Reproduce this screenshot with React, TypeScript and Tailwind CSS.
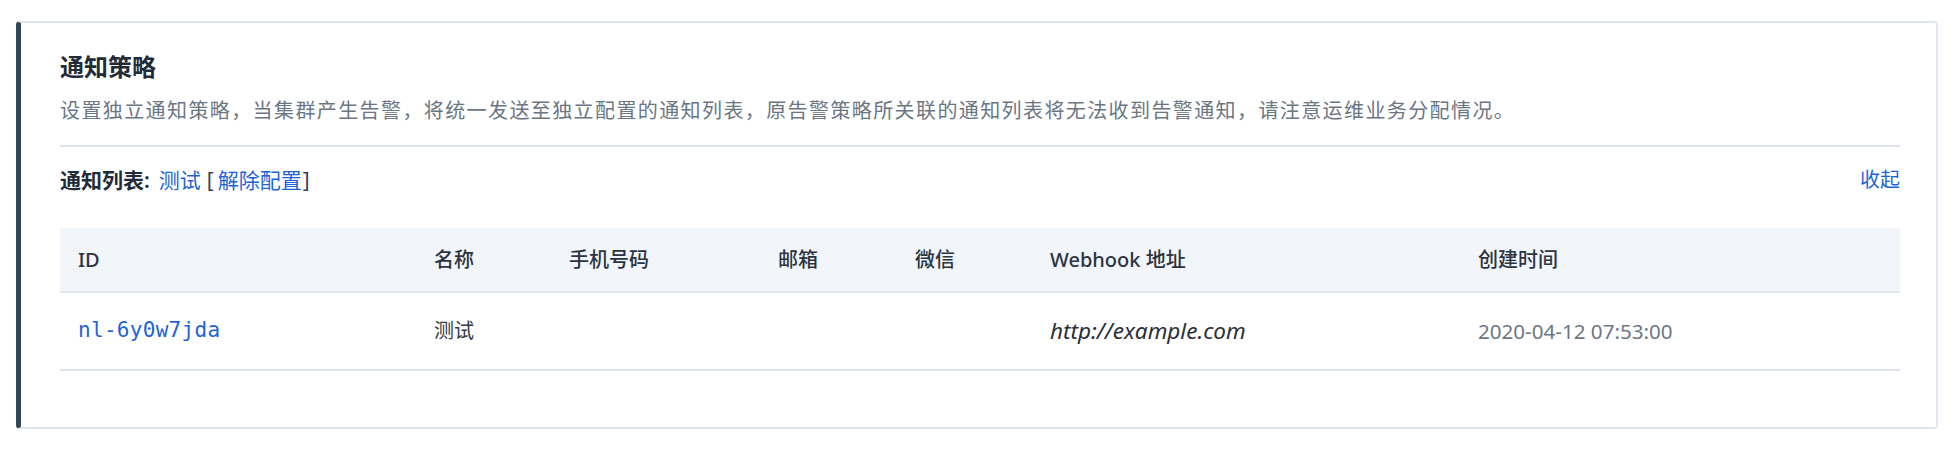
import React from "react";

const cols = "grid grid-cols-[356px_135px_209px_137px_135px_428px_440px]";

export default function App() {
  return (
    <div
      className="w-[1960px] h-[452px] bg-white pt-[21px] pl-[16px] pr-[22px]"
      style={{ fontFamily: '"Noto Sans", "Noto Sans CJK SC", sans-serif' }}
    >
      <div className="h-[408px] border-2 border-[#dfe6ee] border-l-[5px] border-l-[#34465a] rounded-[4px] pl-[39px] pr-[36px] pt-[28px]">
        <div className="text-[24px] leading-[32px] font-semibold text-[#222b38]">通知策略</div>
        <div className="mt-[13px] text-[20px] leading-[30px] tracking-[1.4px] text-[#6b7684] whitespace-nowrap">
          设置独立通知策略，当集群产生告警，将统一发送至独立配置的通知列表，原告警策略所关联的通知列表将无法收到告警通知，请注意运维业务分配情况。
        </div>
        <div className="mt-[19px] h-[2px] bg-[#dfe6ee]" />
        <div className="mt-[18px] flex items-center justify-between text-[21px] leading-[30px]">
          <div className="flex items-center text-[#3a4250]">
            <span className="font-semibold text-[#222b38]">通知列表:</span>
            <span className="ml-[9px] text-[#1e63d6]">测试</span>
            <span className="ml-[6px]">[</span>
            <span className="ml-[4px] text-[#1e63d6]">解除配置</span>
            <span className="ml-[1px]">]</span>
          </div>
          <span className="text-[20px] text-[#1e63d6]">收起</span>
        </div>
        <div className="mt-[33px]">
          <div className={`${cols} h-[65px] items-center bg-[#f2f5f9] border-b-2 border-[#dfe6ee] text-[20px] font-medium text-[#2b3442]`}>
            <div className="pl-[18px]">ID</div>
            <div className="pl-[18px]">名称</div>
            <div className="pl-[18px]">手机号码</div>
            <div className="pl-[18px]">邮箱</div>
            <div className="pl-[18px]">微信</div>
            <div className="pl-[18px]">Webhook 地址</div>
            <div className="pl-[18px]">创建时间</div>
          </div>
          <div className={`${cols} h-[78px] items-center border-b-2 border-[#dfe6ee] text-[20px] text-[#333a44]`}>
            <div
              className="pl-[18px] text-[21px] tracking-[0.3px] text-[#1e63d6]"
              style={{ fontFamily: '"DejaVu Sans Mono", monospace' }}
            >
              nl-6y0w7jda
            </div>
            <div className="pl-[18px]">测试</div>
            <div className="pl-[18px]" />
            <div className="pl-[18px]" />
            <div className="pl-[18px]" />
            <div className="pl-[18px] italic text-[22.5px] text-[#2b2f36]">http://example.com</div>
            <div className="pl-[18px] text-[20.6px] text-[#6c7784]">2020-04-12 07:53:00</div>
          </div>
        </div>
      </div>
    </div>
  );
}
